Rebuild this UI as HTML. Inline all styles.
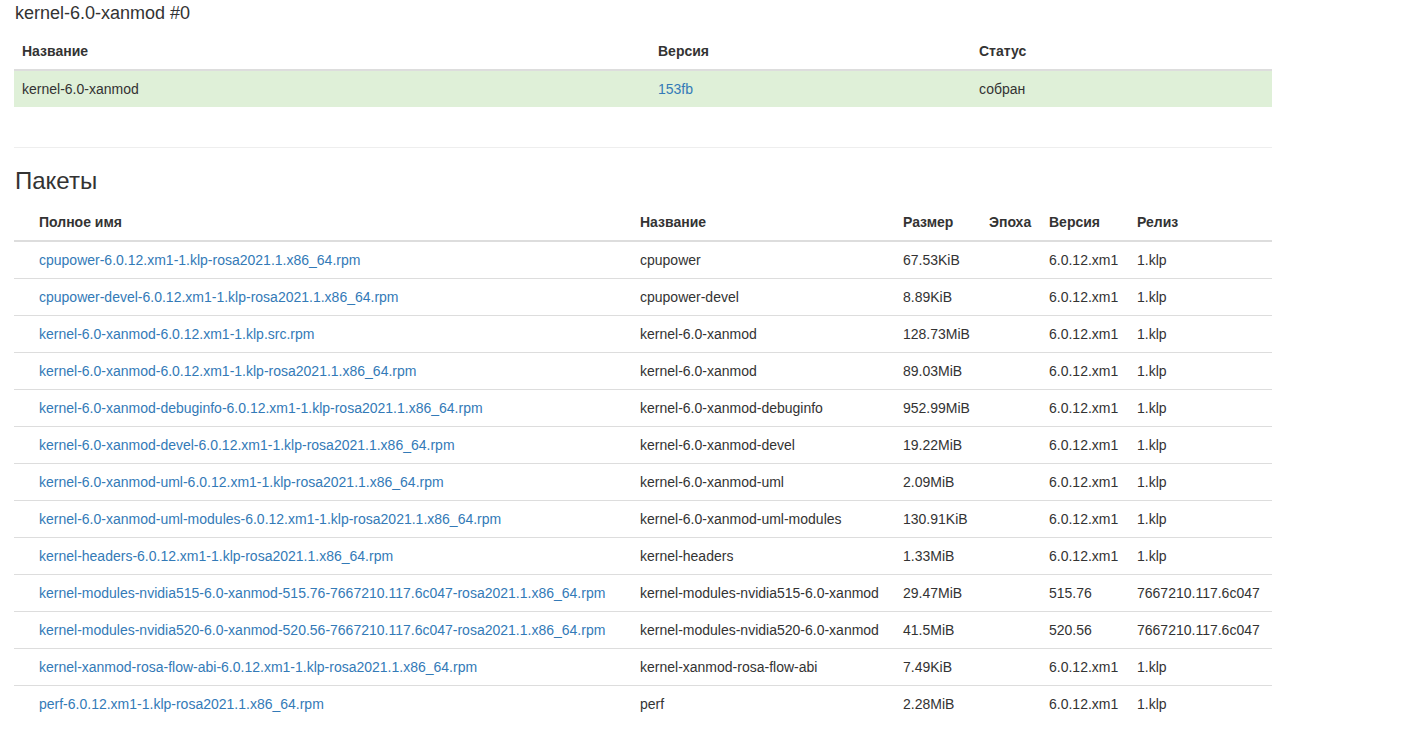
<!DOCTYPE html>
<html><head><meta charset="utf-8">
<style>
html,body{margin:0;padding:0;background:#fff;}
body{font-family:"Liberation Sans",sans-serif;font-size:14px;line-height:20px;color:#333;width:1416px;height:736px;overflow:hidden;position:relative;}
a{color:#337ab7;text-decoration:none;}
.t1title{position:absolute;left:15px;top:2px;font-size:18px;line-height:22px;margin:0;font-weight:normal;color:#333;}
table{border-collapse:collapse;border-spacing:0;table-layout:fixed;position:absolute;left:14px;width:1258px;}
td,th{padding:8px;line-height:20px;text-align:left;vertical-align:top;border-top:1px solid #ddd;white-space:nowrap;}
th{font-weight:bold;border-top:0;border-bottom:2px solid #ddd;vertical-align:bottom;}
thead tr:first-child th{border-top:0;}
tbody tr:first-child td{border-top:0;}
#t1{top:33px;}
#t1 tr.ok td{background:#dff0d8;}
hr{position:absolute;left:14px;width:1258px;top:147px;margin:0;border:0;border-top:1px solid #eee;}
.h3{position:absolute;left:15px;top:167px;font-size:24px;line-height:28px;margin:0;font-weight:normal;color:#333;}
#t2{top:204px;}
</style></head><body>
<div class="t1title">kernel-6.0-xanmod #0</div>
<table id="t1">
<colgroup><col style="width:636px"><col style="width:321px"><col></colgroup>
<thead><tr><th>Название</th><th>Версия</th><th>Статус</th></tr></thead>
<tbody><tr class="ok"><td>kernel-6.0-xanmod</td><td><a>153fb</a></td><td>собран</td></tr></tbody>
</table>
<hr>
<div class="h3">Пакеты</div>
<table id="t2">
<colgroup><col style="width:618px"><col style="width:263px"><col style="width:86px"><col style="width:60px"><col style="width:88px"><col></colgroup>
<thead><tr><th style="padding-left:25px">Полное имя</th><th>Название</th><th>Размер</th><th>Эпоха</th><th>Версия</th><th>Релиз</th></tr></thead>
<tbody>
<tr><td style="padding-left:25px"><a>cpupower-6.0.12.xm1-1.klp-rosa2021.1.x86_64.rpm</a></td><td>cpupower</td><td>67.53KiB</td><td></td><td>6.0.12.xm1</td><td>1.klp</td></tr>
<tr><td style="padding-left:25px"><a>cpupower-devel-6.0.12.xm1-1.klp-rosa2021.1.x86_64.rpm</a></td><td>cpupower-devel</td><td>8.89KiB</td><td></td><td>6.0.12.xm1</td><td>1.klp</td></tr>
<tr><td style="padding-left:25px"><a>kernel-6.0-xanmod-6.0.12.xm1-1.klp.src.rpm</a></td><td>kernel-6.0-xanmod</td><td>128.73MiB</td><td></td><td>6.0.12.xm1</td><td>1.klp</td></tr>
<tr><td style="padding-left:25px"><a>kernel-6.0-xanmod-6.0.12.xm1-1.klp-rosa2021.1.x86_64.rpm</a></td><td>kernel-6.0-xanmod</td><td>89.03MiB</td><td></td><td>6.0.12.xm1</td><td>1.klp</td></tr>
<tr><td style="padding-left:25px"><a>kernel-6.0-xanmod-debuginfo-6.0.12.xm1-1.klp-rosa2021.1.x86_64.rpm</a></td><td>kernel-6.0-xanmod-debuginfo</td><td>952.99MiB</td><td></td><td>6.0.12.xm1</td><td>1.klp</td></tr>
<tr><td style="padding-left:25px"><a>kernel-6.0-xanmod-devel-6.0.12.xm1-1.klp-rosa2021.1.x86_64.rpm</a></td><td>kernel-6.0-xanmod-devel</td><td>19.22MiB</td><td></td><td>6.0.12.xm1</td><td>1.klp</td></tr>
<tr><td style="padding-left:25px"><a>kernel-6.0-xanmod-uml-6.0.12.xm1-1.klp-rosa2021.1.x86_64.rpm</a></td><td>kernel-6.0-xanmod-uml</td><td>2.09MiB</td><td></td><td>6.0.12.xm1</td><td>1.klp</td></tr>
<tr><td style="padding-left:25px"><a>kernel-6.0-xanmod-uml-modules-6.0.12.xm1-1.klp-rosa2021.1.x86_64.rpm</a></td><td>kernel-6.0-xanmod-uml-modules</td><td>130.91KiB</td><td></td><td>6.0.12.xm1</td><td>1.klp</td></tr>
<tr><td style="padding-left:25px"><a>kernel-headers-6.0.12.xm1-1.klp-rosa2021.1.x86_64.rpm</a></td><td>kernel-headers</td><td>1.33MiB</td><td></td><td>6.0.12.xm1</td><td>1.klp</td></tr>
<tr><td style="padding-left:25px"><a>kernel-modules-nvidia515-6.0-xanmod-515.76-7667210.117.6c047-rosa2021.1.x86_64.rpm</a></td><td>kernel-modules-nvidia515-6.0-xanmod</td><td>29.47MiB</td><td></td><td>515.76</td><td>7667210.117.6c047</td></tr>
<tr><td style="padding-left:25px"><a>kernel-modules-nvidia520-6.0-xanmod-520.56-7667210.117.6c047-rosa2021.1.x86_64.rpm</a></td><td>kernel-modules-nvidia520-6.0-xanmod</td><td>41.5MiB</td><td></td><td>520.56</td><td>7667210.117.6c047</td></tr>
<tr><td style="padding-left:25px"><a>kernel-xanmod-rosa-flow-abi-6.0.12.xm1-1.klp-rosa2021.1.x86_64.rpm</a></td><td>kernel-xanmod-rosa-flow-abi</td><td>7.49KiB</td><td></td><td>6.0.12.xm1</td><td>1.klp</td></tr>
<tr><td style="padding-left:25px"><a>perf-6.0.12.xm1-1.klp-rosa2021.1.x86_64.rpm</a></td><td>perf</td><td>2.28MiB</td><td></td><td>6.0.12.xm1</td><td>1.klp</td></tr>
</tbody>
</table>
</body></html>
